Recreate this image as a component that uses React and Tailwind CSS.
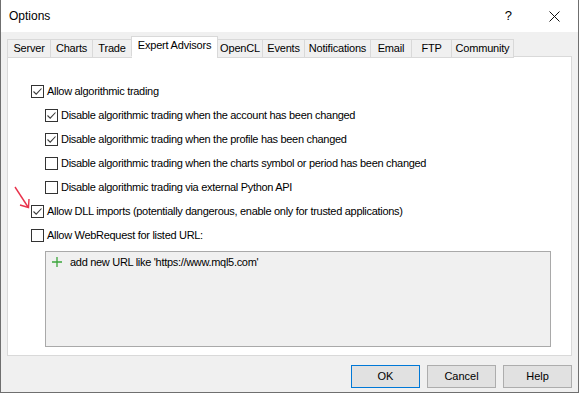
import React from 'react';

const FONT = { fontFamily: '"Liberation Sans", Arial, sans-serif' };

const tabs = [
  { label: 'Server', w: 'w-[44px]' },
  { label: 'Charts', w: 'w-[43px]' },
  { label: 'Trade', w: 'w-[40px]' },
  { label: 'Expert Advisors', w: 'w-[87px]', active: true },
  { label: 'OpenCL', w: 'w-[46px]' },
  { label: 'Events', w: 'w-[43px]' },
  { label: 'Notifications', w: 'w-[67px]' },
  { label: 'Email', w: 'w-[42px]' },
  { label: 'FTP', w: 'w-[41px]' },
  { label: 'Community', w: 'w-[63px]' },
];

// Win32 style checkbox
const CheckBox = ({ checked }) => (
  <span className="w-[13px] h-[13px] border border-[#333333] bg-white flex items-center justify-center shrink-0">
    {checked && (
      <svg width="11" height="11" viewBox="0 0 11 11">
        <path d="M1.5 5.5 L4.2 8.2 L9.5 2.5" fill="none" stroke="#3b3b3b" strokeWidth="1.1" />
      </svg>
    )}
  </span>
);

const Row = ({ checked, indent, children }) => (
  <div className={`h-[24px] flex items-center gap-[3px] ${indent ? 'pl-[14px]' : ''}`}>
    <CheckBox checked={checked} />
    <span className="text-[11px] tracking-[-0.3px] text-black leading-none">{children}</span>
  </div>
);

const Button = ({ primary, children }) => (
  <button
    className={`w-[69px] h-[23px] text-[11px] text-black bg-[#e1e1e1] border ${primary ? 'border-[#0078d7]' : 'border-[#adadad]'}`}
  >
    {children}
  </button>
);

export default function App() {
  return (
    <div style={FONT} className="w-[579px] h-[393px] bg-[#f0f0f0] border-l border-r border-b border-[#6f6f6f] flex flex-col relative">
      {/* title bar */}
      <div className="h-[32px] bg-white flex items-center pl-[8px] pr-[18px] shrink-0">
        <span className="text-[12px] text-black flex-1">Options</span>
        <span className="text-[13px] text-black mr-[37px]">?</span>
        <svg width="11" height="11" viewBox="0 0 11 11">
          <path d="M0.5 0.5 L10.5 10.5 M10.5 0.5 L0.5 10.5" stroke="#111" strokeWidth="1" />
        </svg>
      </div>

      <div className="px-[6px] pt-[5px] flex flex-col">
        {/* tab strip */}
        <div className="flex items-end h-[20px] relative z-10">
          {tabs.map((t) => (
            <div
              key={t.label}
              className={`${t.w} flex items-center justify-center text-[11px] tracking-[-0.2px] text-black border border-[#d9d9d9] -mr-px ${t.active ? 'h-[21px] bg-white border-b-white pb-[3px]' : 'h-[19px] bg-[#f0f0f0] -mb-px'}`}
            >
              {t.label}
            </div>
          ))}
        </div>

        {/* panel */}
        <div className="h-[300px] bg-white border border-[#d9d9d9] -mt-px pl-[23px] pt-[22px] flex flex-col">
          <Row checked>Allow algorithmic trading</Row>
          <Row checked indent>Disable algorithmic trading when the account has been changed</Row>
          <Row checked indent>Disable algorithmic trading when the profile has been changed</Row>
          <Row indent>Disable algorithmic trading when the charts symbol or period has been changed</Row>
          <Row indent>Disable algorithmic trading via external Python API</Row>
          <Row checked>Allow DLL imports (potentially dangerous, enable only for trusted applications)</Row>
          <Row>Allow WebRequest for listed URL:</Row>

          <div className="ml-[14px] mt-[4px] w-[506px] h-[96px] bg-[#f0f0f0] border border-[#a9a9a9] pl-[6px] pt-[4px]">
            <div className="flex items-center gap-[8px] h-[12px]">
              <svg width="10" height="10" viewBox="0 0 10 10">
                <path d="M5 0 V10 M0 5 H10" stroke="#3ba53b" strokeWidth="1.3" />
              </svg>
              <span className="text-[11px] tracking-[-0.3px] text-black leading-none">add new URL like 'https://www.mql5.com'</span>
            </div>
          </div>
        </div>

        {/* buttons */}
        <div className="flex justify-end gap-[7px] pt-[9px]">
          <Button primary>OK</Button>
          <Button>Cancel</Button>
          <Button>Help</Button>
        </div>
      </div>

      {/* red annotation arrow */}
      <svg className="absolute left-[12px] top-[185px]" width="20" height="26" viewBox="0 0 20 26">
        <path d="M2 2 L15 22" stroke="#e8324b" strokeWidth="1.4" fill="none" />
        <path d="M7 20 L15.5 22.5 L16 14" stroke="#e8324b" strokeWidth="1.4" fill="none" />
      </svg>
    </div>
  );
}
